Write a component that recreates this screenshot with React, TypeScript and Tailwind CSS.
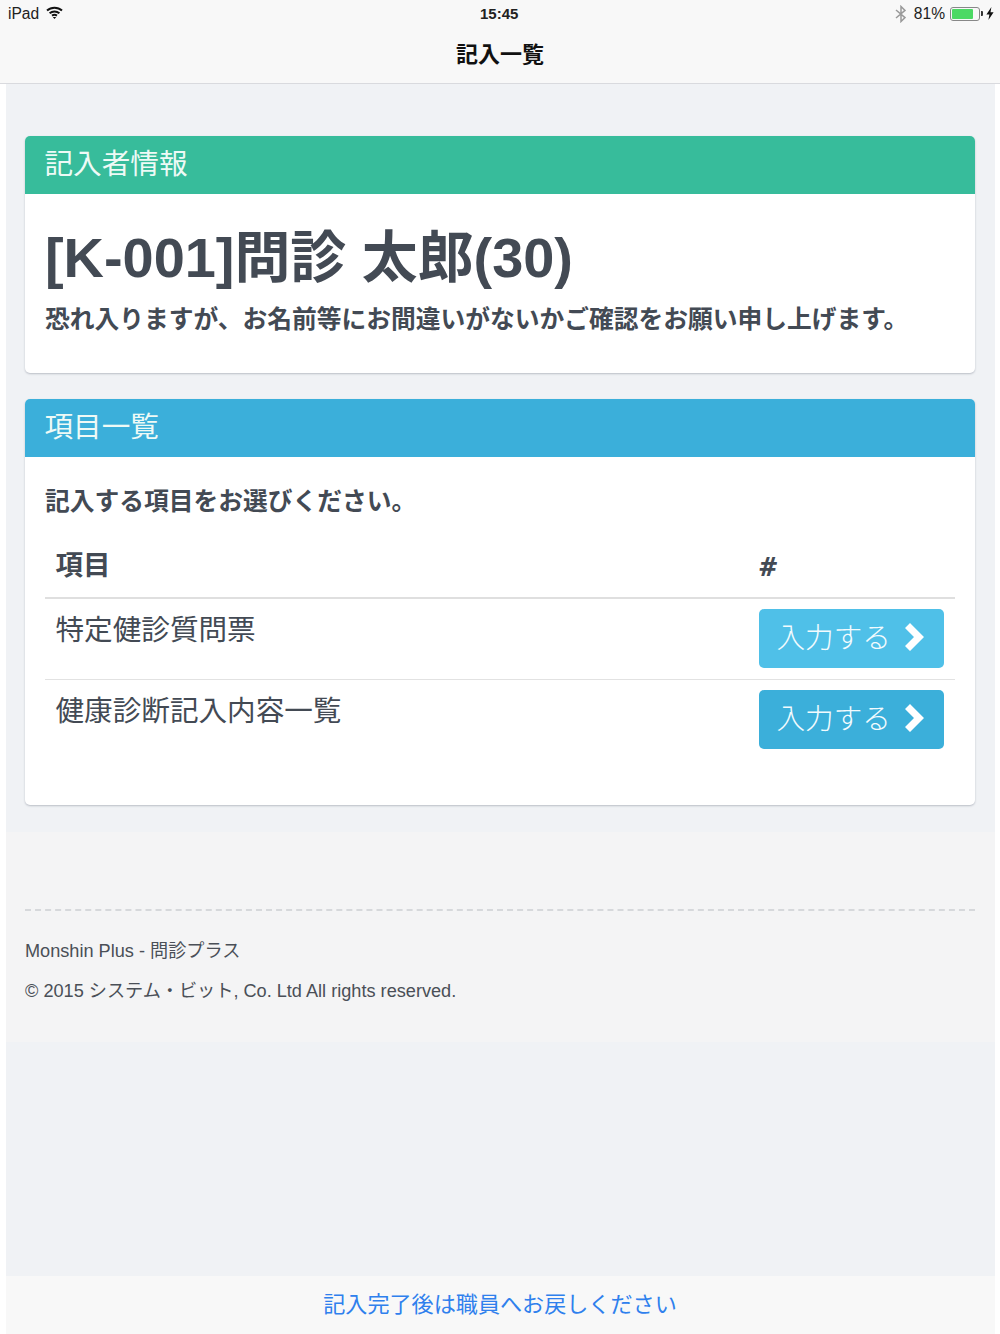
const FONT = "font-['Liberation_Sans','Noto_Sans_CJK_JP',sans-serif]"

// iOS status bar + nav title
function TopBar() {
  return (
    <header className="h-[84px] bg-[#f8f8f8] border-b border-[#d9dade] shrink-0">
      <div className="relative flex h-[28px] items-center justify-between pl-2 pr-[6px] text-[15.6px] text-[#222]">
        <div className="flex items-center gap-[7px]">
          <span>iPad</span>
          <svg width="17" height="13" viewBox="0 0 17 13" fill="none" stroke="#111" strokeWidth="2" className="-translate-y-[1px]">
            <path d="M1 4.6C5.2.8 11.8.8 16 4.6" />
            <path d="M3.6 7.2C6.4 4.9 10.6 4.9 13.4 7.2" />
            <path d="M6 9.6C7.4 8.6 9.6 8.6 11 9.6" />
            <path d="M8.5 13 6.8 11h3.4z" fill="#111" stroke="none" />
          </svg>
        </div>
        <span className="absolute left-[480px] top-[4px] text-[15px] font-bold leading-[20px]">15:45</span>
        <div className="flex items-center">
          <svg width="12" height="18" viewBox="0 0 12 18" fill="none" stroke="#999" strokeWidth="1.5" className="mr-[7px]">
            <path d="M1 5 10 12.6 6 16.5V1.5L10 5.4 1 13" />
          </svg>
          <span>81%</span>
          <div className="ml-[5px] flex h-[14px] w-[30px] rounded-[3px] border border-[#888] p-[1px]">
            <div className="w-[21px] rounded-[1px] bg-[#4cd964]" />
          </div>
          <div className="ml-[1px] h-[5px] w-[2px] rounded-r-[1px] bg-[#333]" />
          <svg width="8" height="13" viewBox="0 0 8 13" fill="#111" className="ml-[3px]">
            <path d="M5.4 0 0.4 7.4h3L2.4 13l5.2-7.8h-3.1z" />
          </svg>
        </div>
      </div>
      <h1 className="mt-[12px] text-center text-[22px] font-bold leading-[30px] text-[#111]">記入一覧</h1>
    </header>
  )
}

function Card({ title, color, children }: { title: string; color: string; children: React.ReactNode }) {
  return (
    <section className="overflow-hidden rounded-[5px] bg-white shadow-[0_1px_2px_rgba(60,70,90,0.3)]">
      <div className={`h-[58px] pl-[19.5px] pr-5 text-[28.6px] leading-[56px] text-[#eefaf6] ${color}`}>{title}</div>
      {children}
    </section>
  )
}

function InputButton({ color }: { color: string }) {
  return (
    <button className={`flex h-[59px] w-[185px] items-center rounded-[5px] pl-[17.5px] text-[28.6px] font-light text-[#f2fbfe] ${color}`}>
      入力する
      <svg width="19" height="28" viewBox="0 0 19 28" fill="#fff" className="mb-[3px] ml-[14px]">
        <path d="M5 0 19 14 5 28 0 23 9 14 0 5z" />
      </svg>
    </button>
  )
}

const ROWS = [
  { name: '特定健診質問票', color: 'bg-[#4fc0e8]', border: 'border-b border-[#e2e2e2]' },
  { name: '健康診断記入内容一覧', color: 'bg-[#3bafda]', border: '' },
]

export default function App() {
  return (
    <div className={`${FONT} flex h-[1334px] w-full flex-col overflow-hidden bg-white text-[#434a54]`}>
      <TopBar />
      <main className="mx-[5.5px] flex flex-1 flex-col bg-[#f0f2f5]">
        <div className="flex h-[748px] shrink-0 flex-col gap-[26px] px-[19.5px] pt-[52px]">
          <Card title="記入者情報" color="bg-[#37bc9b]">
            <div className="h-[179px] px-5 pt-[33px]">
              <h2 className="text-[55.9px] font-bold leading-[62px]">[K-001]問診 太郎(30)</h2>
              <p className="mt-[14px] text-[24.75px] font-bold leading-[34px]">
                恐れ入りますが、お名前等にお間違いがないかご確認をお願い申し上げます。
              </p>
            </div>
          </Card>
          <Card title="項目一覧" color="bg-[#3bafda]">
            <div className="h-[348px] px-5 pt-[28px]">
              <p className="text-[24.75px] font-bold leading-[34px]">記入する項目をお選びください。</p>
              <table className="mt-[17px] w-full">
                <thead>
                  <tr className="border-b-2 border-[#dfdfdf] text-left text-[27.5px] font-bold">
                    <th className="h-[62px] w-[714px] pl-[10.5px] pb-[2px]">項目</th>
                    <th className="pb-[2px] font-['Open_Sans',sans-serif] font-bold italic">#</th>
                  </tr>
                </thead>
                <tbody>
                  {ROWS.map((row) => (
                    <tr key={row.name} className={row.border}>
                      <td className="h-[81px] pl-[10.5px] pb-[18px] align-middle text-[28.6px] leading-[40px]">{row.name}</td>
                      <td className="align-middle">
                        <InputButton color={row.color} />
                      </td>
                    </tr>
                  ))}
                </tbody>
              </table>
            </div>
          </Card>
        </div>
        <footer className="h-[210px] shrink-0 bg-[#f4f4f5] px-[19.5px] pt-[77px] text-[18.15px] text-[#4a4f57]">
          <div className="border-t-2 border-dashed border-[#d6d8db] pt-[26px]">
            <p className="leading-[28px]">Monshin Plus - 問診プラス</p>
            <p className="mt-[12px] leading-[28px]">© 2015 システム・ビット, Co. Ltd All rights reserved.</p>
          </div>
        </footer>
        <div className="flex-1" />
        <div className="flex h-[58px] shrink-0 items-center justify-center bg-[#f8f8f8] pb-[1px] text-[22.1px] text-[#2f80ed]">
          記入完了後は職員へお戻しください
        </div>
      </main>
    </div>
  )
}
